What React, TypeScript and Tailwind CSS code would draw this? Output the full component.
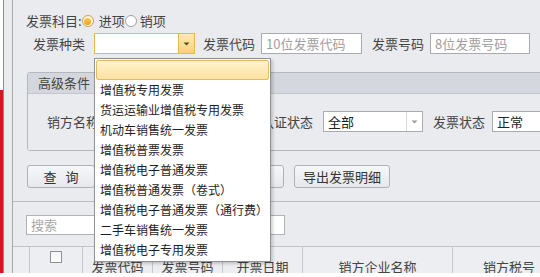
import React from "react";

const FONT = { fontFamily: '"Noto Sans CJK SC", "Noto Sans", sans-serif' };

const INVOICE_TYPES = [
  "增值税专用发票",
  "货运运输业增值税专用发票",
  "机动车销售统一发票",
  "增值税普票发票",
  "增值税电子普通发票",
  "增值税普通发票（卷式）",
  "增值税电子普通发票（通行费）",
  "二手车销售统一发票",
  "增值税电子专用发票",
];

function Label({ text, className = "" }: { text: string; className?: string }) {
  return (
    <div className={`w-[52px] shrink-0 text-[13px] leading-[20px] text-[#444] whitespace-nowrap ${className}`}>
      {text}
    </div>
  );
}

function TextBox({ width, placeholder, value }: { width: string; placeholder?: string; value?: string }) {
  return (
    <div className={`${width} h-[21px] shrink-0 border border-[#a9abb0] bg-white flex items-center px-[4px]`}>
      <span className={`text-[13px] leading-[20px] whitespace-nowrap ${value ? "text-[#222]" : "text-[#a0a0a0]"}`}>
        {value ?? placeholder}
      </span>
    </div>
  );
}

function Arrow({ color }: { color: string }) {
  return (
    <svg width="7" height="4" viewBox="0 0 7 4">
      <path d="M0.5 0.5 L6.5 0.5 L3.5 3.5 Z" fill={color} />
    </svg>
  );
}

function Combo({ width, value, focused }: { width: string; value?: string; focused?: boolean }) {
  return (
    <div
      className={`${width} h-[21px] shrink-0 flex bg-white border ${
        focused ? "border-[#e6b94e]" : "border-[#a9abb0]"
      }`}
    >
      <div className="flex-1 flex items-center px-[4px] text-[13px] leading-[20px] text-[#222]">{value}</div>
      <div
        className={`w-[16px] flex items-center justify-center border-l ${
          focused ? "border-[#e6b94e] bg-gradient-to-b from-[#fde9b0] to-[#f8d27c]" : "border-[#d4d6da] bg-white"
        }`}
      >
        <Arrow color={focused ? "#5a4a20" : "#9a9a9a"} />
      </div>
    </div>
  );
}

function Radio({ checked }: { checked?: boolean }) {
  return (
    <div
      className={`w-[12px] h-[12px] rounded-full border flex items-center justify-center ${
        checked ? "border-[#c9a24a] bg-[#fff7e0]" : "border-[#9ea1a6] bg-white"
      }`}
    >
      {checked && <div className="w-[7px] h-[7px] rounded-full bg-gradient-to-b from-[#fbc84a] to-[#ee9f12]" />}
    </div>
  );
}

function Button({ children, width }: { children?: React.ReactNode; width: string }) {
  return (
    <div
      className={`${width} h-[23px] shrink-0 rounded-[3px] border border-[#aeb1b7] bg-gradient-to-b from-[#f6f7f9] to-[#e6e8ec] flex items-center justify-center text-[13px] leading-[20px] text-[#333]`}
    >
      {children}
    </div>
  );
}

export default function App() {
  return (
    <div className="relative w-[540px] h-[277px] overflow-hidden bg-white" style={FONT}>
      <div className="flex h-[273px]">
        <div className="w-[3px] flex flex-col">
          <div className="h-[90px] bg-white" />
          <div className="flex-1 bg-[#d9141b]" />
        </div>
        <div className="w-px bg-[#8c8e92]" />
        <div className="w-[8px] bg-[#eaebef]" />
        <div className="w-px bg-[#a6a9ae]" />

        <div className="flex-1 flex flex-col bg-[#eaebef] overflow-hidden">
          <div className="h-[3px] bg-white flex justify-end">
            <div className="w-[15px] bg-[#f4a81e]" />
          </div>

          {/* 发票科目 */}
          <div className="mt-[11px] h-[20px] pl-[13px] flex items-center text-[13px] leading-[20px] text-[#444]">
            <span>发票科目:</span>
            <Radio checked />
            <span className="ml-[5px]">进项</span>
            <Radio />
            <span className="ml-[3px]">销项</span>
          </div>

          {/* 发票种类 */}
          <div className="mt-[2px] pl-[20px] flex items-center">
            <Label text="发票种类" />
            <div className="ml-[9px]">
              <Combo width="w-[101px]" focused />
            </div>
            <Label text="发票代码" className="ml-[8px]" />
            <div className="ml-[6px]">
              <TextBox width="w-[101px]" placeholder="10位发票代码" />
            </div>
            <Label text="发票号码" className="ml-[10px]" />
            <div className="ml-[6px]">
              <TextBox width="w-[100px]" placeholder="8位发票号码" />
            </div>
          </div>

          {/* 高级条件 */}
          <div className="mt-[18px] ml-[14px] w-[530px] h-[79px] shrink-0 border border-[#b4b7bd] rounded-[3px] flex flex-col overflow-hidden">
            <div className="h-[21px] bg-[#d4d7dd] border-b border-[#c4c7cd] pl-[10px] flex items-center text-[13px] leading-[20px] text-[#444]">
              高级条件
            </div>
            <div className="flex-1 bg-[#e9ebef] pt-[17px] pl-[19px]">
              <div className="flex items-center">
                <Label text="销方名称" />
                <div className="ml-[5px]">
                  <TextBox width="w-[152px]" />
                </div>
                <Label text="认证状态" className="ml-[5px]" />
                <div className="ml-[10px]">
                  <Combo width="w-[100px]" value="全部" />
                </div>
                <Label text="发票状态" className="ml-[10px]" />
                <div className="ml-[7px]">
                  <TextBox width="w-[100px]" value="正常" />
                </div>
              </div>
            </div>
          </div>

          {/* buttons */}
          <div className="mt-[14px] ml-[14px] flex">
            <Button width="w-[68px]">
              <span className="flex gap-[9px]">
                <span>查</span>
                <span>询</span>
              </span>
            </Button>
            <div className="ml-[10px]">
              <Button width="w-[68px]" />
            </div>
            <div className="ml-[12px]">
              <Button width="w-[99px]" />
            </div>
            <div className="ml-[10px]">
              <Button width="w-[96px]">导出发票明细</Button>
            </div>
          </div>

          {/* grid panel */}
          <div className="mt-[13px] flex-1 border-t border-[#b9bcc2] flex flex-col">
            <div className="mt-[13px] ml-[13px] w-[259px] h-[20px] border border-[#b0b3b8] bg-white flex items-center px-[4px]">
              <span className="text-[13px] leading-[20px] text-[#a8a8a8]">搜索</span>
            </div>
            <div className="mt-[11px] border-t border-[#c0c3c8] bg-[#eceef1] h-[40px] shrink-0 flex text-[13px] leading-[20px] text-[#444]">
              <div className="w-[17px] shrink-0 border-r border-[#c6c8cc]" />
              <div className="w-[53px] shrink-0 border-r border-[#c6c8cc] flex justify-center pt-[4px]">
                <div className="w-[12px] h-[12px] border border-[#8e9196] bg-gradient-to-b from-[#f4f4f4] to-white" />
              </div>
              {[
                ["发票代码", "w-[70px]"],
                ["发票号码", "w-[70px]"],
                ["开票日期", "w-[80px]"],
                ["销方企业名称", "w-[150px]"],
              ].map(([t, w]) => (
                <div key={t} className={`${w} shrink-0 border-r border-[#c6c8cc] flex items-center justify-center whitespace-nowrap`}>
                  {t}
                </div>
              ))}
              <div className="flex-1 flex items-center justify-end pr-[5px] whitespace-nowrap">销方税号</div>
            </div>
          </div>
        </div>
      </div>

      {/* dropdown list */}
      <div className="absolute left-[94px] top-[58px] w-[177px] border border-[#8f9194] bg-white p-[1px] shadow-[2px_2px_3px_rgba(0,0,0,0.18)]">
        <div className="h-[20px] rounded-[2px] border border-[#e2bd60] bg-gradient-to-b from-[#fff3cc] to-[#fde2a0]" />
        {INVOICE_TYPES.map((t) => (
          <div key={t} className="h-[20px] pl-[4px] flex items-center text-[12px] leading-[20px] text-[#1e1e1e] whitespace-nowrap">
            {t}
          </div>
        ))}
      </div>
    </div>
  );
}
